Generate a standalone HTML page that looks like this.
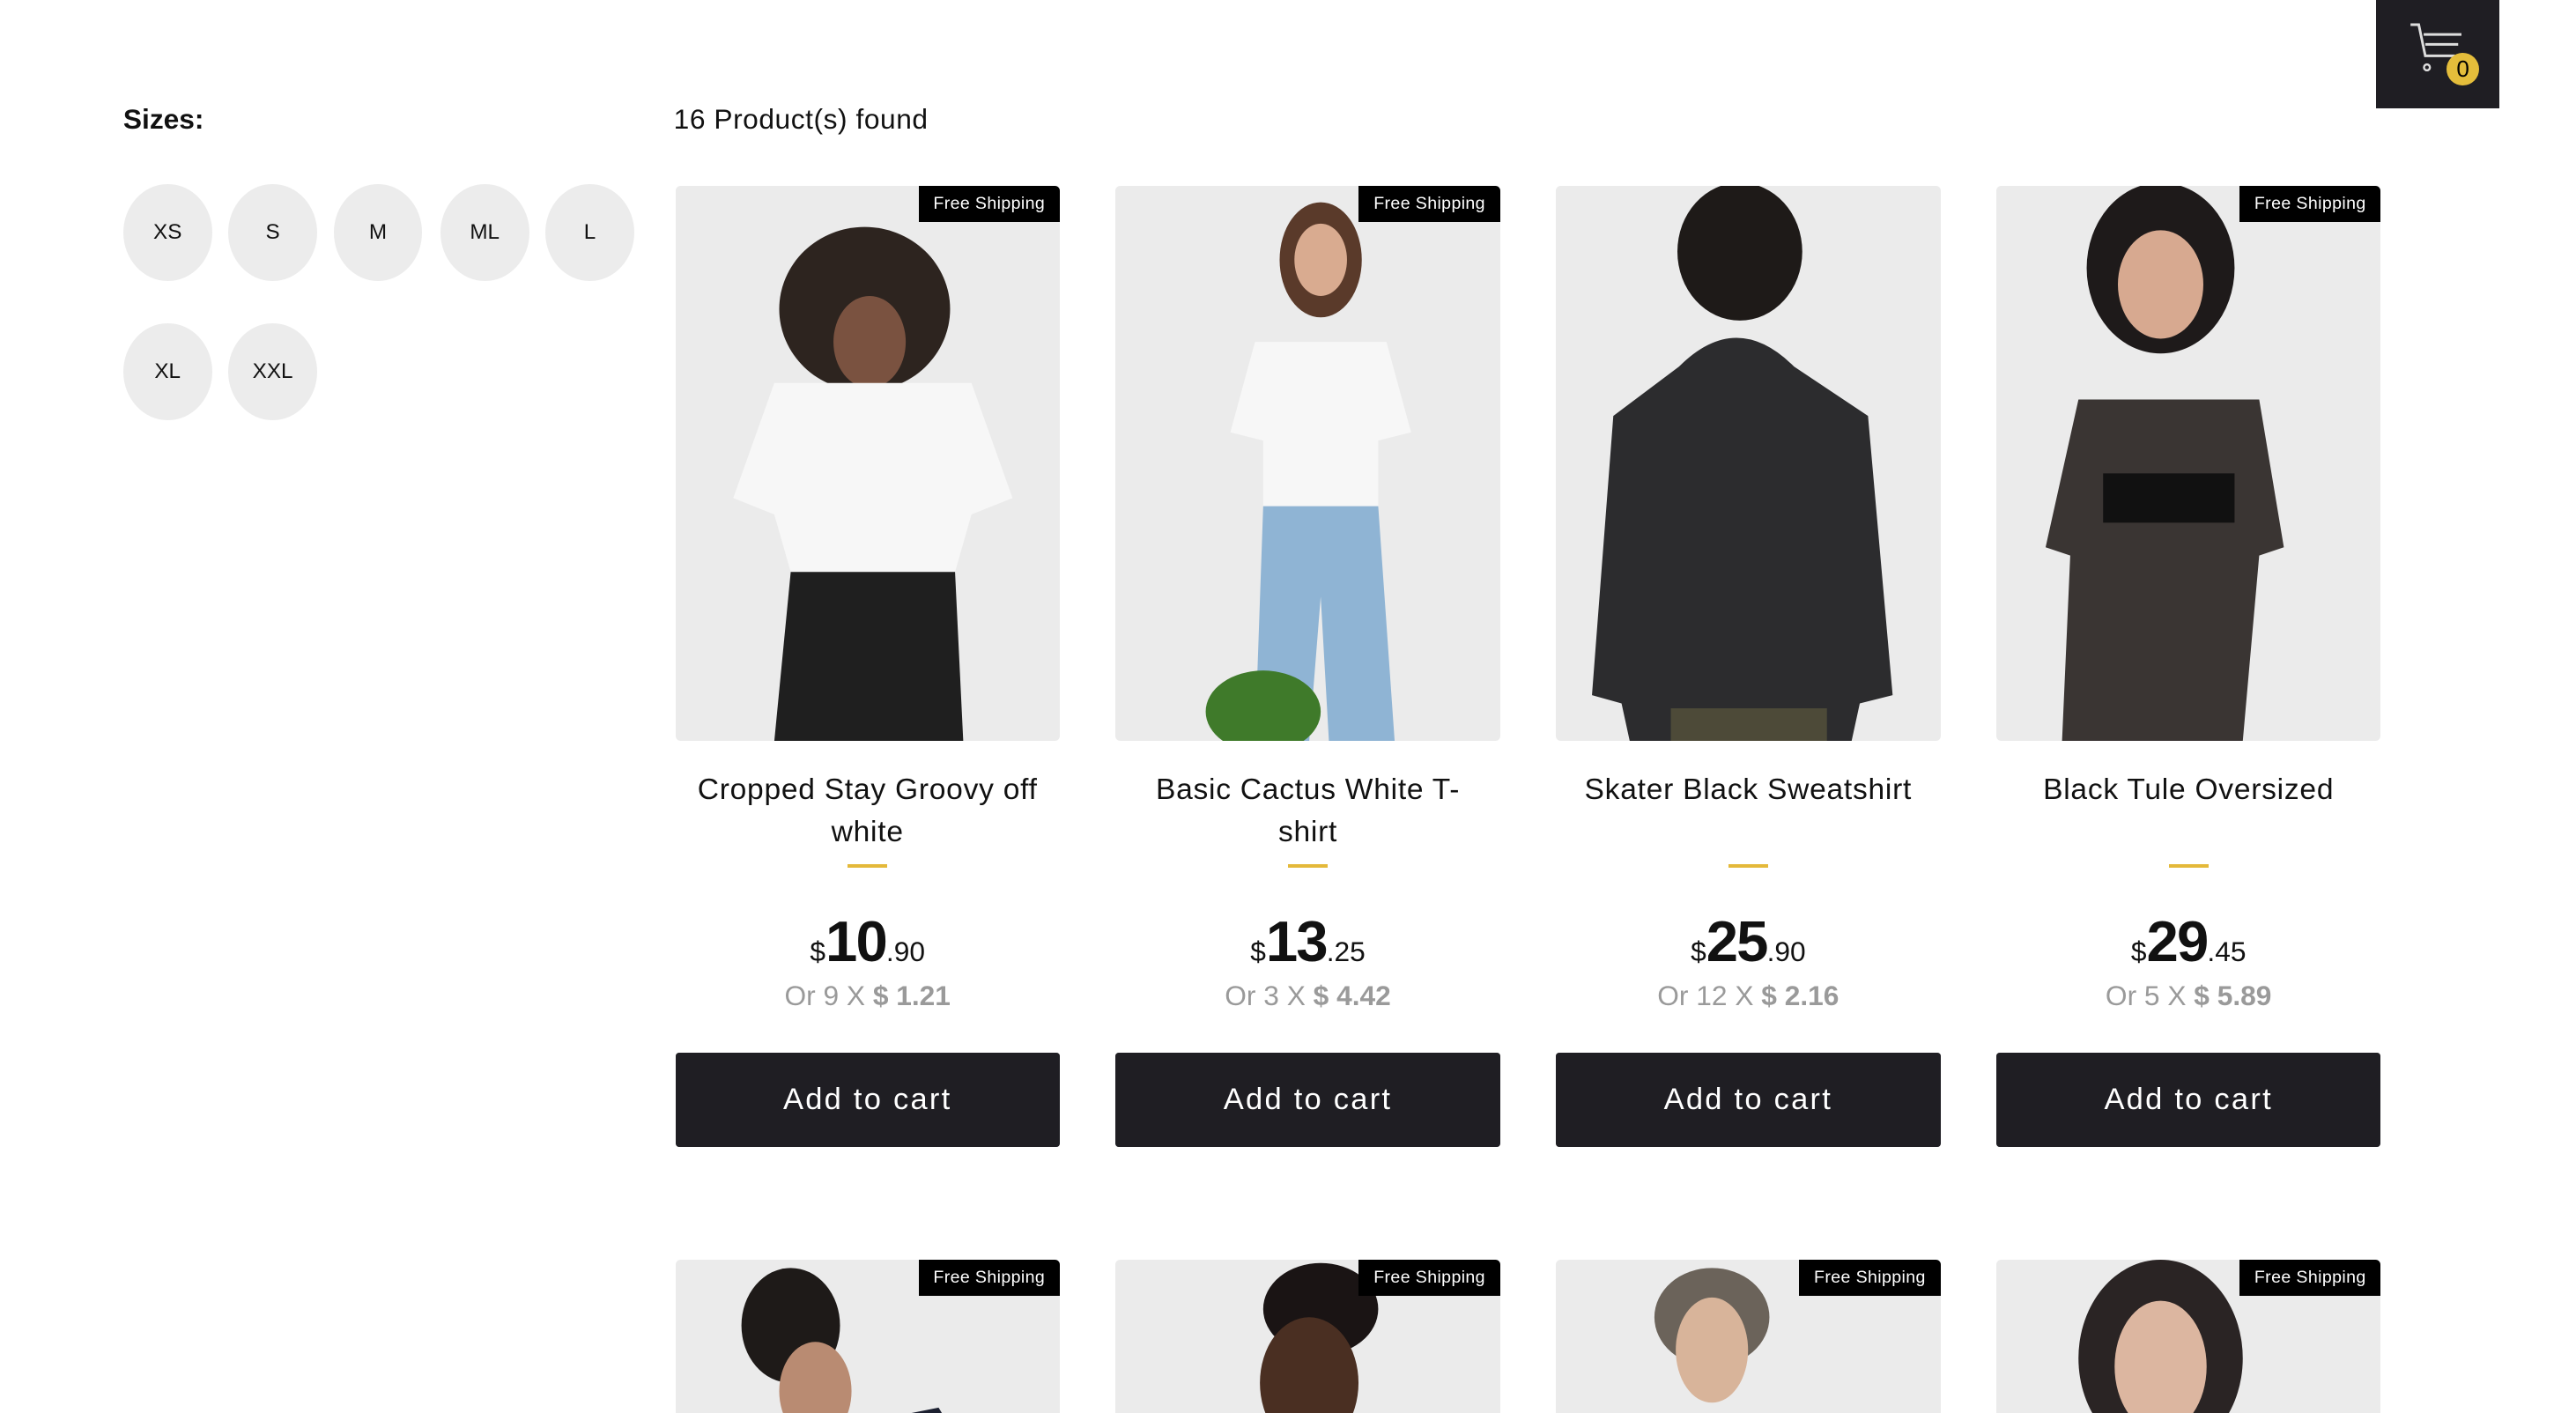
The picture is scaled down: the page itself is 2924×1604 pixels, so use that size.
<!DOCTYPE html>
<html><head><meta charset="utf-8"><style>
html,body{margin:0;padding:0;background:#fff;width:2924px;height:1604px;overflow:hidden;}
#root{width:1568px;height:860px;overflow:hidden;zoom:1.865;position:relative;font-family:"Liberation Sans",sans-serif;color:#111;}
.abs{position:absolute;}
.sz{position:absolute;width:54px;height:59px;border-radius:50%;background:#ececec;font-size:13px;display:flex;align-items:center;justify-content:center;color:#111;}
.card{position:absolute;width:234px;}
.img{position:absolute;left:0;top:0;width:234px;height:338px;background:#ebebeb;border-radius:3px;overflow:hidden;}
.tag{position:absolute;right:0;top:0;background:#000;color:#fff;font-size:10.5px;padding:0 9px;height:22px;line-height:22px;letter-spacing:0.2px;}
.title{position:absolute;top:355px;left:0;width:234px;box-sizing:border-box;padding:0 12px;text-align:center;font-size:18px;letter-spacing:0.4px;line-height:26px;}
.line{position:absolute;top:413px;left:105px;width:24px;height:2px;background:#e4b93a;}
.price{position:absolute;top:440px;left:0;width:234px;text-align:center;font-size:17px;}
.price b{font-size:35px;font-weight:bold;letter-spacing:-1px;}
.inst{position:absolute;top:483px;left:0;width:234px;text-align:center;font-size:17px;color:#9a9a9a;}
.inst b{color:#9a9a9a;}
.btn{position:absolute;top:528px;left:0;width:234px;height:57px;background:#1f1e23;color:#fff;font-size:18.5px;letter-spacing:1.2px;display:flex;align-items:center;justify-content:center;border-radius:2px;}
</style></head><body><div id="root">
<div class="abs" style="left:75px;top:63px;font-size:17px;font-weight:bold;">Sizes:</div>
<div class="sz" style="left:75px;top:112px">XS</div>
<div class="sz" style="left:139px;top:112px">S</div>
<div class="sz" style="left:203px;top:112px">M</div>
<div class="sz" style="left:268px;top:112px">ML</div>
<div class="sz" style="left:332px;top:112px">L</div>
<div class="sz" style="left:75px;top:197px">XL</div>
<div class="sz" style="left:139px;top:197px">XXL</div>
<div class="abs" style="left:410px;top:63px;font-size:17px;letter-spacing:0.3px;">16 Product(s) found</div>

<div class="abs" style="left:1446px;top:0;width:75px;height:66px;background:#1f1e23;">
<svg width="75" height="66" viewBox="0 0 75 66"><path d="M21 15h5l4 19h18" fill="none" stroke="#ddd" stroke-width="1.6"/><path d="M29 21h23M30 27h20" stroke="#ddd" stroke-width="1.6"/><circle cx="31" cy="41" r="1.8" fill="none" stroke="#ddd" stroke-width="1.3"/></svg>
<div class="abs" style="left:43px;top:32px;width:20px;height:20px;border-radius:50%;background:#e4bd3b;color:#000;font-size:14px;text-align:center;line-height:20px;">0</div>
</div>

<div class="card" style="left:411px;top:113px">
<div class="img"><svg width="234" height="338"><ellipse cx="115" cy="75" rx="52" ry="50" fill="#2d241f"/><ellipse cx="118" cy="95" rx="22" ry="28" fill="#7a5240"/><path d="M60 120 L180 120 L205 190 L180 200 L170 235 L70 235 L60 200 L35 190Z" fill="#f7f7f7"/><path d="M70 235 L170 235 L175 338 L60 338Z" fill="#1f1f1f"/></svg><div class="tag">Free Shipping</div></div>
<div class="title">Cropped Stay Groovy off white</div><div class="line"></div>
<div class="price">$<b>10</b>.90</div><div class="inst">Or 9 X <b>$ 1.21</b></div><div class="btn">Add to cart</div></div>

<div class="card" style="left:679px;top:113px">
<div class="img"><svg width="234" height="338"><ellipse cx="125" cy="45" rx="25" ry="35" fill="#5a3a2a"/><ellipse cx="125" cy="45" rx="16" ry="22" fill="#d9ab90"/><path d="M85 95 L165 95 L180 150 L160 155 L160 195 L90 195 L90 155 L70 150Z" fill="#f7f7f7"/><path d="M90 195 L160 195 L170 338 L130 338 L125 250 L118 338 L85 338Z" fill="#8fb4d4"/><ellipse cx="90" cy="320" rx="35" ry="25" fill="#3f7a2a"/></svg><div class="tag">Free Shipping</div></div>
<div class="title">Basic Cactus White T-shirt</div><div class="line"></div>
<div class="price">$<b>13</b>.25</div><div class="inst">Or 3 X <b>$ 4.42</b></div><div class="btn">Add to cart</div></div>

<div class="card" style="left:947px;top:113px">
<div class="img"><svg width="234" height="338"><ellipse cx="112" cy="40" rx="38" ry="42" fill="#1e1a18"/><path d="M75 110 Q110 75 145 110 L190 140 L205 310 L185 315 L180 338 L45 338 L40 315 L22 310 L35 140Z" fill="#2c2c2e"/><rect x="70" y="318" width="95" height="20" fill="#4d4a38"/></svg></div>
<div class="title">Skater Black Sweatshirt</div><div class="line"></div>
<div class="price">$<b>25</b>.90</div><div class="inst">Or 12 X <b>$ 2.16</b></div><div class="btn">Add to cart</div></div>

<div class="card" style="left:1215px;top:113px">
<div class="img"><svg width="234" height="338"><ellipse cx="100" cy="50" rx="45" ry="52" fill="#1e1a1a"/><ellipse cx="100" cy="60" rx="26" ry="33" fill="#d7a990"/><path d="M50 130 L160 130 L175 220 L160 225 L150 338 L40 338 L45 225 L30 220Z" fill="#3a3533"/><rect x="65" y="175" width="80" height="30" fill="#111"/></svg><div class="tag">Free Shipping</div></div>
<div class="title">Black Tule Oversized</div><div class="line"></div>
<div class="price">$<b>29</b>.45</div><div class="inst">Or 5 X <b>$ 5.89</b></div><div class="btn">Add to cart</div></div>

<div class="card" style="left:411px;top:767px"><div class="img"><svg width="234" height="338"><ellipse cx="70" cy="40" rx="30" ry="35" fill="#1e1a18"/><ellipse cx="85" cy="80" rx="22" ry="30" fill="#b98b72"/><path d="M110 100 L160 90 L190 140 L120 140Z" fill="#1c2030"/></svg><div class="tag">Free Shipping</div></div></div>
<div class="card" style="left:679px;top:767px"><div class="img"><svg width="234" height="338"><ellipse cx="125" cy="30" rx="35" ry="28" fill="#1a1414"/><ellipse cx="118" cy="75" rx="30" ry="40" fill="#4a2f22"/></svg><div class="tag">Free Shipping</div></div></div>
<div class="card" style="left:947px;top:767px"><div class="img"><svg width="234" height="338"><ellipse cx="95" cy="35" rx="35" ry="30" fill="#6b635a"/><ellipse cx="95" cy="55" rx="22" ry="32" fill="#d8b49a"/></svg><div class="tag">Free Shipping</div></div></div>
<div class="card" style="left:1215px;top:767px"><div class="img"><svg width="234" height="338"><ellipse cx="100" cy="60" rx="50" ry="60" fill="#2a2424"/><ellipse cx="100" cy="65" rx="28" ry="40" fill="#dcb6a0"/></svg><div class="tag">Free Shipping</div></div></div>
</div></body></html>
